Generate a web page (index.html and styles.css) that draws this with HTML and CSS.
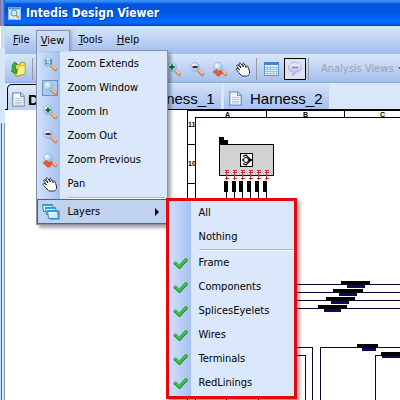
FILE: index.html
```html
<!DOCTYPE html>
<html lang="en">
<head>
<meta charset="utf-8">
<title>Intedis Design Viewer</title>
<link rel="stylesheet" href="styles.css">
</head>
<body>
<svg class="defs" aria-hidden="true">
  <defs>
    <radialGradient id="lens" cx=".35" cy=".3" r=".8"><stop offset="0" stop-color="#f4fdff"/><stop offset=".6" stop-color="#a5d3ee"/><stop offset="1" stop-color="#74acd2"/></radialGradient>
    <linearGradient id="bubble" x2="0" y2="1"><stop offset="0" stop-color="#f4f2ff"/><stop offset="1" stop-color="#aaa5e6"/></linearGradient>
    <linearGradient id="pane" x2="1" y2="1"><stop offset="0" stop-color="#fff"/><stop offset="1" stop-color="#a9e2fb"/></linearGradient>
    <symbol id="glass" viewBox="0 0 16 16">
      <path d="M9.500 9.500l4 4" stroke="#c58455" stroke-width="3.200" stroke-linecap="round"/>
      <path d="M10 9.300l3.400 3.400" stroke="#ffc597" stroke-width="1.800" stroke-linecap="round"/>
      <circle cx="6" cy="6" r="4.500" fill="url(#lens)" stroke="#9dbfd8"/>
    </symbol>
    <symbol id="zoom-extends" viewBox="0 0 16 16"><use href="#glass"/><path d="M3 4.500l1-1v5M8 4.500l1-1v5M6 4.500v1M6 7v1" stroke="#335f8e" fill="none"/></symbol>
    <symbol id="zoom-window" viewBox="0 0 16 16"><rect x=".5" y=".5" width="15" height="15" fill="#a9c9f1" stroke="#24579e" stroke-dasharray="1 1"/><use href="#glass"/></symbol>
    <symbol id="zoom-in" viewBox="0 0 16 16"><use href="#glass"/><path d="M6 3.500v5M3.500 6h5" stroke="#0b7426" stroke-width="2"/></symbol>
    <symbol id="zoom-out" viewBox="0 0 16 16"><use href="#glass"/><path d="M3.500 6h5" stroke="#7d1515" stroke-width="2"/></symbol>
    <symbol id="zoom-prev" viewBox="0 0 16 16"><use href="#glass"/><path d="M1 11l4-3v2h5v3H8v2H5v-1z" fill="#ee5a34" stroke="#cf3f20" stroke-width=".6"/></symbol>
    <symbol id="hand" viewBox="0 0 16 16"><path d="M5 13L2 9.500Q.5 8 1.500 7.500t3 1.500L2 5Q1.500 3.500 3 3.800L6 7 4 3Q4 1.500 5.500 2.200L8.500 6 7.500 3Q8 1.600 9.200 2.700L11 6.500 11.500 5Q12.700 4.400 13 6L14.500 10v3l-2 2H7z" fill="#fff" stroke="#111" stroke-linejoin="round" stroke-dasharray="2 .4"/></symbol>
    <symbol id="layers" viewBox="0 0 18 18">
      <path d="M7 7h11v10H8z" fill="#77838e" opacity=".6"/>
      <g fill="url(#pane)" stroke="#2388cf"><path d="M.5 1.500h10l1 7h-10z"/><path d="M3.500 4.500h10l1 7h-10z"/><path d="M5.500 7.500h10l1 8h-10z"/></g>
      <path d="M1 2.200h9.500M4 5.200h9.500M6 8.200h9.500" stroke="#36a3df" stroke-width="1.500"/>
    </symbol>
    <symbol id="check" viewBox="0 0 16 16"><path d="M2.500 8.500l4 3.500L13 5" fill="none" stroke="#229a37" stroke-width="3.600" stroke-linecap="round" stroke-linejoin="round"/><path d="M2.500 8l4 3.300L13 4.500" fill="none" stroke="#4bc453" stroke-width="1.800" stroke-linecap="round" stroke-linejoin="round"/></symbol>
    <symbol id="page" viewBox="0 0 13 15"><path d="M.8.8h8l3.400 3.400v10H.8z" fill="#f7faff" stroke="#7e93b3" stroke-width="1.300"/><path d="M8.500 1v3.500H12" fill="#cad8ee" stroke="#7e93b3"/><path d="M3 6.500h7M3 8.500h7M3 10.500h7M3 12h7" stroke="#b4c3da"/></symbol>
    <symbol id="open" viewBox="0 0 16 16"><path d="M5 3l4 1 1-3 4 1v11l-8 2.500-3-2z" fill="#f8df56" stroke="#b49424"/><path d="M7 6l7-2v8.500L6 15z" fill="#fff28b" stroke="#caa92c" stroke-width=".7"/><path d="M4 1Q0 3 1.500 9L0 10l5 3 1.500-5-2 .7Q3.500 5 6 3z" fill="#37b52f" stroke="#168124" stroke-width=".7"/></symbol>
  </defs>
</svg>
<div class="desktop">
  <div class="behind"><i class="behind-title"></i><i class="behind-white"></i><i class="behind-bar"></i><i class="behind-edge"></i></div>
  <div class="window">
    <header class="title">
      <svg width="13" height="13" viewBox="0 0 13 13"><rect x=".5" y=".5" width="12" height="12" fill="#d6eafa" stroke="#8fbce9"/><path d="M1 1.500h11" stroke="#4b93df" stroke-width="2"/><path d="M7 7l4 4" stroke="#e39459" stroke-width="2"/><circle cx="6" cy="6" r="3" fill="#cdeafa" stroke="#5f93c2"/></svg>
      <h1>Intedis Design Viewer</h1>
    </header>
    <nav class="menubar">
      <button class="top"><u>F</u>ile</button>
      <div class="holder">
        <button class="top open"><u>V</u>iew</button>
        <div class="menu main-menu">
          <button class="item"><svg class="ico"><use href="#zoom-extends"/></svg><span>Zoom Extends</span></button>
          <button class="item"><svg class="ico"><use href="#zoom-window"/></svg><span>Zoom Window</span></button>
          <button class="item"><svg class="ico"><use href="#zoom-in"/></svg><span>Zoom In</span></button>
          <button class="item"><svg class="ico"><use href="#zoom-out"/></svg><span>Zoom Out</span></button>
          <button class="item"><svg class="ico"><use href="#zoom-prev"/></svg><span>Zoom Previous</span></button>
          <button class="item"><svg class="ico"><use href="#hand"/></svg><span>Pan</span></button>
          <hr>
          <div class="holder">
            <button class="item active"><svg class="ico layers"><use href="#layers"/></svg><span>Layers</span><svg class="arrow" viewBox="0 0 4 8"><path d="M0 0l4 4-4 4z"/></svg></button>
            <div class="menu submenu">
              <button class="item"><i class="ico"></i><span>All</span></button>
              <button class="item"><i class="ico"></i><span>Nothing</span></button>
              <hr>
              <button class="item"><svg class="ico"><use href="#check"/></svg><span>Frame</span></button>
              <button class="item"><svg class="ico"><use href="#check"/></svg><span>Components</span></button>
              <button class="item"><svg class="ico"><use href="#check"/></svg><span>SplicesEyelets</span></button>
              <button class="item"><svg class="ico"><use href="#check"/></svg><span>Wires</span></button>
              <button class="item"><svg class="ico"><use href="#check"/></svg><span>Terminals</span></button>
              <button class="item"><svg class="ico"><use href="#check"/></svg><span>RedLinings</span></button>
            </div>
          </div>
        </div>
      </div>
      <button class="top"><u>T</u>ools</button>
      <button class="top"><u>H</u>elp</button>
    </nav>
    <div class="toolbar">
      <button class="tool" aria-label="Open"><svg class="ico"><use href="#open"/></svg></button>
      <i class="sep"></i>
      <div class="tools">
        <button class="tool" aria-label="Zoom in"><svg class="ico"><use href="#zoom-in"/></svg></button>
        <button class="tool" aria-label="Zoom out"><svg class="ico"><use href="#zoom-out"/></svg></button>
        <button class="tool" aria-label="Zoom previous"><svg class="ico"><use href="#zoom-prev"/></svg></button>
        <button class="tool" aria-label="Pan"><svg class="ico"><use href="#hand"/></svg></button>
      </div>
      <i class="sep"></i>
      <button class="tool grid" aria-label="Table"><svg width="15" height="14" viewBox="0 0 15 14"><rect x=".5" y=".5" width="14" height="13" fill="#f2f8ff" stroke="#5a9adb"/><path d="M0 1.500h15" stroke="#3b86d6" stroke-width="3"/><path d="M1 5.500h13M1 7.500h13M1 9.500h13M1 11.500h13M3.500 4v9M6.500 4v9M9.500 4v9M12.500 4v9" stroke="#8db7e8" stroke-width=".8"/></svg></button>
      <button class="tool pressed" aria-label="Comments"><svg width="16" height="16" viewBox="0 0 16 16"><path d="M8 1.500c4 0 6.500 2 6.500 5s-3 4.700-5.500 4.500L6 15v-4C3 10.500 1.500 9 1.500 6.500c0-3 2.500-5 6.500-5z" fill="url(#bubble)" stroke="#b6afe5"/><path d="M5 6.500h6" stroke="#8d82ce" stroke-width="1.500"/></svg></button>
      <i class="sep"></i>
      <button class="analysis" disabled>Analysis Views <svg width="7" height="4" viewBox="0 0 7 4"><path d="M0 0h7L3.500 4z"/></svg></button>
    </div>
    <div class="tabs">
      <button class="tab current"><svg><use href="#page"/></svg>D</button>
      <button class="tab"><svg><use href="#page"/></svg>Harness_1</button>
      <button class="tab"><svg><use href="#page"/></svg>Harness_2</button>
    </div>
    <main class="canvas">
      <svg class="drawing" width="1200" height="900" viewBox="5 110 1200 900" shape-rendering="crispEdges">
        <g fill="none" stroke="#000">
          <path d="M187.500 1010V110.500H1205M195.500 1010V117.500H1205M266.500 110v7M344.500 110v7M187 144.500h8M187 183.500h8"/>
        </g>
        <g class="ruler"><text x="225" y="117">A</text><text x="303" y="117">B</text><text x="380" y="117">C</text><text x="188" y="127">11</text><text x="188" y="166">10</text></g>
        <path d="M219 137h5v3h4v5h-9z"/>
        <rect x="219.500" y="144.500" width="54" height="31" fill="#d2d2d2" stroke="#000"/>
        <rect x="240.500" y="153.500" width="12" height="13" fill="#fff" stroke="#000"/>
        <g shape-rendering="auto"><path d="M243 156.500l3-1.500 5 5-5 5-3-1.500M242 160h2M248 160h4" fill="none" stroke="#000" stroke-width="1.300"/><circle cx="246" cy="160" r="2.500" fill="#fff" stroke="#000"/></g>
        <path d="M226.500 171v9M234.500 171v9M242.500 171v9M250.500 171v9M258.500 171v9M266.500 171v9M225 170.500h4M233 170.500h4M241 170.500h4M249 170.500h4M257 170.500h4M265 170.500h4M225 172.500h4M233 172.500h4M241 172.500h4M249 172.500h4M257 172.500h4M265 172.500h4M225 178.500h4M233 178.500h4M241 178.500h4M249 178.500h4M257 178.500h4M265 178.500h4" stroke="#c52b30"/>
        <path d="M224 181h4v11h-4zM232 181h4v11h-4zM239 181h4v11h-4zM247 181h4v11h-4zM255 181h4v11h-4zM263 181h4v11h-4z"/>
        <g fill="none" stroke="#080838">
          <path d="M226.500 191v15M234.500 191v15M242.500 191v15M250.500 191v15M258.500 191v15M266.500 191v15"/>
          <path d="M280 284.500H1205M280 292.500H1205M280 300.500H1205M280 308.500H1205M280 347.500h32.500V1010M280 355.500h25.500V1010M320.500 1010V347.500H1205M375.500 1010V355.500H1205"/>
          <path d="M226.500 398v12M258.500 398v12"/>
        </g>
        <path d="M341 281h29v4h-29zM333 289h30v4h-30zM326 297h29v4h-29zM318 305h29v4h-29zM357 344h21v4h-21zM381 352h29v4h-29z"/>
        <path d="M347 285h18v3h-18zM339 293h18v3h-18zM331 301h18v3h-18zM324 309h17v3h-17zM362 348h14v3h-14zM382 356h22v2h-22z" fill="#090960"/>
      </svg>
    </main>
  </div>
</div>
</body>
</html>
```
FILE: styles.css
```css
* { box-sizing: border-box; }
body { margin: 0; overflow: hidden; font: 11px/14px "DejaVu Sans Condensed", Tahoma, sans-serif; color: #000; }
button { border: 0; margin: 0; padding: 0; background: none; font: inherit; color: inherit; }
.defs { position: absolute; width: 0; height: 0; }
.desktop { display: flex; height: 100vh; }

.behind { width: 5px; flex: none; display: flex; flex-direction: column; background: #d8e6fa; }
.behind-title { height: 26px; background: linear-gradient(90deg, #8a6d9b, #7ba0df 50%, #1454cf); }
.behind-white { height: 22px; background: linear-gradient(90deg, #fff 1px, #c9dcf6 1px); }
.behind-bar { height: 75px; background: #d8e6fa; }
.behind-edge { flex: 1; background: linear-gradient(90deg, #c4dafa 1px, #3a69b4 1px, #3a69b4 2px, #d6e5fc 2px, #d6e5fc 4px, #8995a9 4px); }

.window { flex: 1; min-width: 0; display: flex; flex-direction: column; }
.title { height: 26px; padding: 0 3px; display: flex; align-items: center; gap: 5px; background: linear-gradient(#3f96fb 0, #2a83f4 2px, #0355dd 4px, #0054df 11px, #0062f8 17px, #0268ff 23px, #0040ae 26px); }
.title h1 { margin: 0; font: bold 12px/16px "DejaVu Sans Condensed", Tahoma, sans-serif; color: #fff; text-shadow: 1px 1px #053a9a; }

.menubar { height: 28px; padding: 4px 0 4px 2px; display: flex; background: linear-gradient(#d6e5fb, #a1bdec); }
.top { height: 20px; padding: 0 6px; }
.holder { position: relative; }
.top.open { position: relative; z-index: 3; width: 34px; height: 21px; padding: 0 4px; border: 1px solid #8592a6; border-bottom: 0; background: linear-gradient(#cbdcf6, #bed3f5); box-shadow: 2px 0 2px #7b8da977; }
.holder + .top { margin: 0 2px 0 3px; }

.menu { position: absolute; z-index: 2; display: flex; flex-direction: column; background: linear-gradient(90deg, #d1e1fb, #a6c1f0 23px, #dbe8fb 23px); box-shadow: 3px 3px 3px #0005; }
.main-menu { top: 20px; left: 0; width: 132px; padding: 1px 0 0; border: 1px solid #8592a6; }
.submenu { top: -1px; left: 129px; width: 131px; padding-bottom: 1px; border: 3px solid #e9070e; background: linear-gradient(90deg, #d1e1fb, #a6c1f0 22px, #dbe8fb 22px); }
.item { height: 24px; padding: 0 5px; display: flex; align-items: center; gap: 10px; text-align: left; white-space: nowrap; }
.item .ico, .tool .ico { width: 16px; height: 16px; flex: none; }
.item .layers { width: 18px; height: 18px; margin-right: -2px; }
.item span { flex: 1; }
.menu hr { width: auto; height: 2px; margin: 1px 2px 0 30px; border: 0; border-top: 1px solid #b1b9c6; border-bottom: 1px solid #fff; }
.submenu hr { margin: 0 0 0 30px; }
.item.active { width: 100%; height: 25px; border: 1px solid #3a64b0; background: #c1d2ee; padding: 0 7px 0 4px; }
.arrow { width: 4px; height: 8px; }
.submenu .item { padding: 0 4px; }

.toolbar { height: 29px; padding-left: 6px; display: flex; align-items: center; background: linear-gradient(#dae7fb, #a6c1ee 27px, #83a5dc 29px); }
.toolbar > * { flex: none; }
.sep { width: 1px; height: 22px; background: #929aa8; margin: 0 5px; }
.tools { width: 213px; display: flex; justify-content: flex-end; gap: 7px; }
.tool { display: flex; }
.toolbar .grid { margin: 0 5px 0 2px; }
.pressed { width: 22px; height: 22px; border: 1px solid #000; background: #dde1ec; align-items: center; justify-content: center; }
.pressed + .sep { margin-left: 2px; }
.analysis { display: flex; align-items: center; gap: 4px; margin-left: 7px; white-space: nowrap; color: #9aa3ae; }
.analysis svg { flex: none; fill: #4d5a70; }

.tabs { height: 27px; padding: 1px 0 0 2px; display: flex; gap: 3px; background: #dae7fb; border-bottom: 1px solid #000; }
.tab { height: 25px; width: 105px; flex: none; padding: 4px 5px 0; display: flex; align-items: center; gap: 8px; font: 15px/18px "Liberation Sans", Arial, sans-serif; background: linear-gradient(#d0e0f8, #a6c1ee); }
.tab svg { width: 13px; height: 15px; flex: none; }
.current { width: 106px; height: 26px; padding-left: 4px; gap: 3px; font-weight: bold; border: 1px solid #000; border-bottom: 0; border-radius: 5px 0 0; background: linear-gradient(#dfeafb, #bad0f3); }

.canvas { flex: 1; min-height: 0; overflow: hidden; background: #fff; }
.drawing { display: block; }
.ruler { font: bold 7px "Liberation Sans", Arial, sans-serif; }
```
